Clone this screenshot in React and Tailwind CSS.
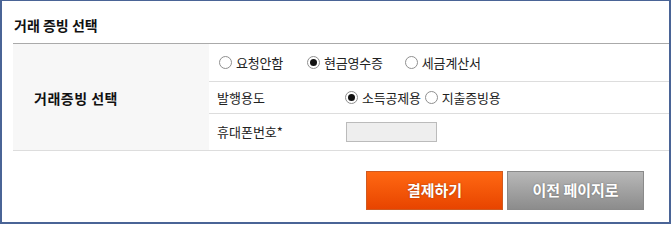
const font = { fontFamily: '"Noto Sans CJK KR", "Noto Sans", sans-serif' };

const Radio = ({ checked, label, className = "" }) => (
  <label className={"flex items-center gap-[4px] " + className}>
    <span className="flex h-[13px] w-[13px] items-center justify-center rounded-full border border-[#8f8f8f] bg-white">
      {checked && <span className="h-[7px] w-[7px] rounded-full bg-[#111]" />}
    </span>
    <span className="text-[13px] tracking-[-0.2px] text-[#222]">{label}</span>
  </label>
);

export default function App() {
  return (
    <div
      className="h-[224px] w-[671px] border-x-2 border-t border-b-2 border-[#4a6496] bg-white pl-[11px]"
      style={font}
    >
      <div className="flex h-[43px] items-center border-b border-[#aaaaaa] pl-[1px] pt-[6px]">
        <h2 className="text-[14px] font-bold text-[#111]">거래 증빙 선택</h2>
      </div>
      <div className="flex border-b border-[#dddddd]">
        <div className="flex w-[196px] items-center bg-[#f7f7f7] pl-[21px] pt-[2px]">
          <span className="text-[14px] font-bold tracking-[0.5px] text-[#111]">거래증빙 선택</span>
        </div>
        <div className="flex-1">
          <div className="flex h-[38px] items-center border-b border-[#dddddd] pl-[10px]">
            <Radio label="요청안함" />
            <Radio checked label="현금영수증" className="ml-[24px]" />
            <Radio label="세금계산서" className="ml-[22px]" />
          </div>
          <div className="flex h-[32px] items-center border-b border-[#dddddd] pl-[8px]">
            <span className="w-[128px] text-[13px] text-[#222]">발행용도</span>
            <Radio checked label="소득공제용" />
            <Radio label="지출증빙용" className="ml-[4px]" />
          </div>
          <div className="flex h-[36px] items-center pl-[8px]">
            <span className="w-[129px] text-[13px] text-[#222]">휴대폰번호*</span>
            <input
              type="text"
              className="h-[20px] w-[91px] border border-[#bbbbbb] bg-[#eeeeee] outline-none"
            />
          </div>
        </div>
      </div>
      <div className="flex justify-end gap-[4px] pr-[25px] pt-[20px]">
        <button className="flex h-[39px] w-[137px] items-center justify-center border border-[#d05a20] bg-gradient-to-b from-[#ff6812] to-[#e84400] text-[15px] font-bold text-white [text-shadow:0_0_2px_rgba(0,0,0,0.35)]">
          결제하기
        </button>
        <button className="flex h-[39px] w-[137px] items-center justify-center border border-[#8a8a8a] bg-gradient-to-b from-[#b8b8b8] to-[#8c8c8c] text-[15px] font-bold text-white [text-shadow:0_0_2px_rgba(0,0,0,0.35)]">
          이전 페이지로
        </button>
      </div>
    </div>
  );
}
